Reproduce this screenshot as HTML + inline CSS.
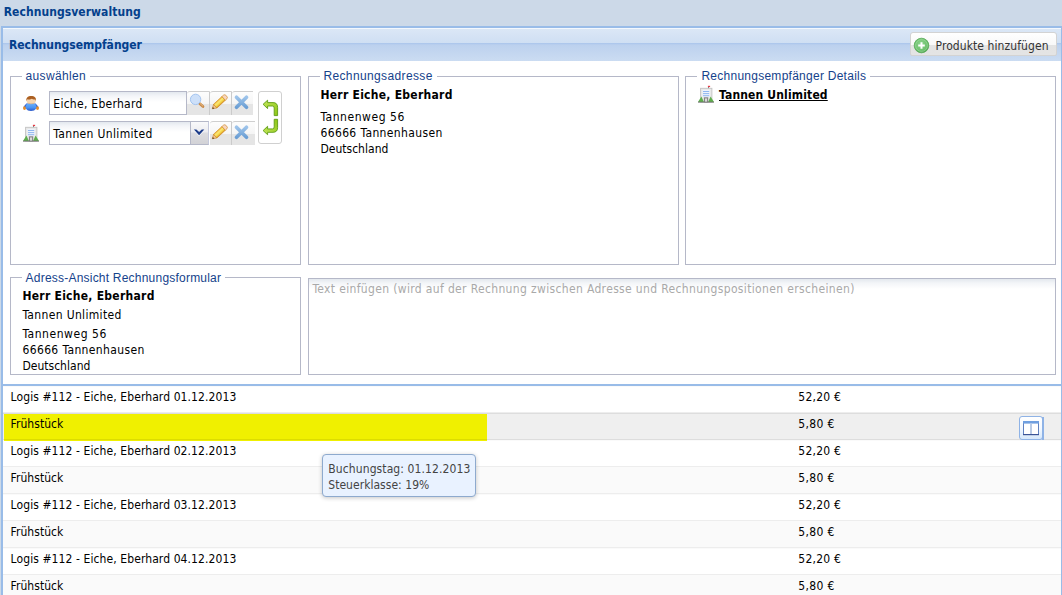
<!DOCTYPE html>
<html lang="de"><head><meta charset="utf-8"><title>Rechnungsverwaltung</title>
<style>
html,body{margin:0;padding:0;}
body{width:1062px;height:595px;overflow:hidden;background:#ccd9e8;position:relative;font-family:"DejaVu Sans Condensed","Liberation Sans",sans-serif;font-size:12px;}
.a{position:absolute;box-sizing:border-box;}
.t{position:absolute;white-space:pre;font-size:12px;line-height:16px;height:16px;}
.panel{left:1px;top:26px;width:1062px;height:600px;border:2px solid #99bce8;background:#fff;}
.hl{left:3px;top:28px;width:1058px;height:1px;background:#f3f8fd;}
.hdr{left:3px;top:29px;width:1058px;height:32px;background:linear-gradient(#dbe7f6 0px,#cfdff3 14px,#a9c5eb 14px,#b2caed 15px,#bcd1ee 16px,#cbdcf2 32px);}
.fs{border:1px solid #b5b8c8;}
.lg{background:#fff;height:3px;}
.fld{border:1px solid #b5b8c8;background:linear-gradient(#e3e8ee 0px,#f3f5f8 4px,#fff 10px);}
.trg{background:linear-gradient(#fdfdfd 0,#f5f5f5 12px,#e5e5e5 12px,#e5e5e5 100%);border-top:1px solid #cfcfcf;border-top-left-radius:3px;}
.sep{border-right:1px solid #cbcbcb;}
.btn{border:1px solid #d3d3d3;border-radius:3px 3px 2px 2px;background:linear-gradient(#ffffff 0,#f8f8f8 12px,#e3e3e3 12px,#e4e4e4 100%);}
.row{left:3px;width:1058px;height:27px;border-top:1px solid #fafafa;border-bottom:1px solid #ededed;background:#fff;}
.alt{background:#fafafa;}
.over{background:#efefef;border-color:#dddddd;}
svg{position:absolute;overflow:visible;}
.ar{font-family:"Liberation Sans","DejaVu Sans Condensed",sans-serif;}

</style></head><body>
<div class="a panel"></div>
<div class="a hl"></div>
<div class="a hdr"></div>
<!-- button Produkte -->
<div class="a btn" style="left:910px;top:32px;width:147px;height:24px;"></div>
<svg style="left:913px;top:37px" width="17" height="17" viewBox="0 0 17 17">
 <defs><radialGradient id="ga" cx="0.45" cy="0.4" r="0.6"><stop offset="0" stop-color="#8fd58f"/><stop offset="0.75" stop-color="#6cc06c"/><stop offset="1" stop-color="#4da24d"/></radialGradient></defs>
 <circle cx="8.5" cy="8.5" r="7.3" fill="url(#ga)" stroke="#55a955" stroke-width="0.8"/>
 <circle cx="8.5" cy="8.5" r="5.9" fill="none" stroke="#a5dca5" stroke-width="0.7" opacity="0.8"/>
 <path d="M7.5 5.2h2v2.3h2.3v2H9.5v2.3h-2V9.5H5.2v-2h2.3z" fill="#fff"/>
</svg>
<!-- fieldsets -->
<div class="a fs" style="left:10px;top:76px;width:291px;height:189px;"></div>
<div class="a fs" style="left:308px;top:76px;width:371px;height:189px;"></div>
<div class="a fs" style="left:685px;top:76px;width:371px;height:189px;"></div>
<div class="a fs" style="left:10px;top:277px;width:291px;height:98px;"></div>
<div class="a lg" style="left:22px;top:75px;width:68px;"></div>
<div class="a lg" style="left:320px;top:75px;width:117px;"></div>
<div class="a lg" style="left:697px;top:75px;width:173px;"></div>
<div class="a lg" style="left:22px;top:276px;width:203px;"></div>
<!-- textarea -->
<div class="a fld" style="left:308px;top:278px;width:748px;height:97px;"></div>
<!-- field row 1 -->
<div class="a fld" style="left:49px;top:91px;width:138px;height:24px;"></div>
<div class="a trg sep" style="left:187px;top:91px;width:23px;height:24px;"></div>
<div class="a trg sep" style="left:210px;top:91px;width:22px;height:24px;"></div>
<div class="a trg" style="left:232px;top:91px;width:21px;height:24px;"></div>
<!-- field row 2 -->
<div class="a fld" style="left:49px;top:121px;width:142px;height:24px;"></div>
<div class="a" style="left:190px;top:121px;width:19px;height:24px;border:1px solid #b5b8c8;border-right-color:#c4c8dc;background:linear-gradient(#f9f9fb 0,#ececf0 10px,#dcdce0 11px,#d2d2d6 100%);"></div>
<svg style="left:193px;top:128px" width="12" height="9" viewBox="0 0 12 9">
 <path d="M.9 2.6 L3.4 2.6 L6.1 5.2 L8.8 2.6 L11.3 2.6 L6.1 8.2 Z" fill="#fff" opacity=".8"/>
 <path d="M.9 1.5 L3.4 1.5 L6.1 4.1 L8.8 1.5 L11.3 1.5 L6.1 7.2 Z" fill="#1d3c8a"/>
</svg>
<div class="a trg sep" style="left:210px;top:121px;width:22px;height:24px;background:linear-gradient(#fdfdfd 0,#f5f5f5 12px,#e5e5e5 12px,#e5e5e5 100%);"></div>
<div class="a trg" style="left:232px;top:121px;width:23px;height:24px;"></div>
<!-- swap button -->
<div class="a" style="left:258px;top:91px;width:24px;height:53px;border:1px solid #d0d0d0;border-radius:3px;background:#fff;"></div>
<!-- grid -->
<div class="a" style="left:3px;top:384px;width:1058px;height:2px;background:#99bce8;"></div>
<div class="a row" style="top:386px;"></div>
<div class="a row over" style="top:413px;"></div>
<div class="a row" style="top:440px;"></div>
<div class="a row alt" style="top:467px;"></div>
<div class="a row" style="top:494px;"></div>
<div class="a row alt" style="top:521px;"></div>
<div class="a row" style="top:548px;"></div>
<div class="a row alt" style="top:575px;"></div>
<div class="a" style="left:4px;top:414px;width:483px;height:27px;background:#f0f000;border-bottom:0;"></div>
<div class="a" style="left:4px;top:439px;width:483px;height:1px;background:#dcdc00;"></div>
<!-- grid action button -->
<div class="a" style="left:1042px;top:417px;width:2px;height:23px;background:#8fb3e6;"></div>
<div class="a" style="left:1019px;top:416px;width:24px;height:24px;border:1px solid #8fb3e6;border-radius:3px;background:linear-gradient(#ffffff 0,#f4f9ff 50%,#d6e8fb 100%);"></div>
<!-- tooltip -->
<div class="a" style="left:322px;top:454px;width:154px;height:43px;border:1px solid #8eaace;border-radius:4px;background:#e9f2ff;box-shadow:0 1px 4px rgba(0,0,0,0.22);z-index:10;"></div>
<!-- ICONS -->
<svg width="0" height="0" style="left:0;top:0">
 <defs>
  <linearGradient id="gb" x1="0" y1="0" x2="0" y2="1"><stop offset="0" stop-color="#6db4fb"/><stop offset="0.6" stop-color="#4a93f3"/><stop offset="1" stop-color="#2a55c6"/></linearGradient>
  <linearGradient id="gp" x1="0" y1="0" x2="0" y2="1"><stop offset="0" stop-color="#f0b637"/><stop offset="0.35" stop-color="#fae978"/><stop offset="0.7" stop-color="#f3d446"/><stop offset="1" stop-color="#d98f1f"/></linearGradient>
  <linearGradient id="gg" x1="0" y1="0" x2="1" y2="1"><stop offset="0" stop-color="#c3e65a"/><stop offset="1" stop-color="#8cc514"/></linearGradient>
  <linearGradient id="gx" x1="0" y1="0" x2="0" y2="1"><stop offset="0" stop-color="#9cc3ea"/><stop offset="1" stop-color="#6c9fd4"/></linearGradient>
  <g id="user">
   <path d="M4.2 7.9 C2.4 9.1 .9 11 .5 12.3 L3 13.8 C3.4 12.3 4.7 10.9 5.8 10.2 Z" fill="#3a68d6"/>
   <path d="M11.8 7.9 C13.6 9.1 15.1 11 15.5 12.3 L13 13.8 C12.6 12.3 11.3 10.9 10.2 10.2 Z" fill="#3a68d6"/>
   <ellipse cx="1.5" cy="13.1" rx="1.5" ry="1.9" fill="#e58c2a"/>
   <ellipse cx="14.5" cy="13.1" rx="1.5" ry="1.9" fill="#e58c2a"/>
   <path d="M3.5 9.2 Q8 6.4 12.5 9.2 Q13.9 11.5 12.8 14 Q11.7 16 8 16 Q4.3 16 3.2 14 Q2.1 11.5 3.5 9.2 Z" fill="url(#gb)"/>
   <rect x="3.5" y="1.1" width="9.4" height="7.7" rx="3.5" fill="#f5d5b0"/>
   <path d="M3.5 6 C2.8 2.6 5.3 .9 8.2 .9 C11.1 .9 13.6 2.6 12.9 6 L12.3 4.4 C11 4.8 9.6 4.6 8.8 3.8 C8 4.5 5.8 4.7 4.2 4.3 Z" fill="#ab5f22"/>
   <path d="M5 7.8 Q8 9.5 11.2 7.8 L10.6 8.7 Q8 9.6 5.6 8.7 Z" fill="#d9a06a"/>
  </g>
  <g id="bld">
   <rect x="9.9" y="-.2" width="2.2" height="1.3" fill="#e83a44"/>
   <rect x="10" y="1" width=".9" height="2.2" fill="#6e6e6e"/>
   <rect x="2.6" y="2.3" width="11.3" height="13.6" fill="#e9e9e9" stroke="#c2c2c2" stroke-width=".9"/>
   <rect x="4.5" y="4" width="7.2" height="6.8" fill="#edf3fc"/>
   <rect x="5" y="5" width="6.2" height="1" fill="#8fb6ef"/>
   <rect x="5" y="7.1" width="6.2" height="1" fill="#8fb6ef"/>
   <rect x="5" y="9.2" width="6.2" height="1" fill="#8fb6ef"/>
   <path d="M0 16 L3.4 10.4 L5.9 16 Z" fill="#5fae4e"/>
   <path d="M16 16 L12.6 10.4 L10.1 16 Z" fill="#5fae4e"/>
   <rect x="5.9" y="11.3" width="4.3" height="4.9" fill="#858585"/>
   <rect x="7" y="12.4" width="2.1" height="3.8" fill="#dadada"/>
   <rect x="0" y="15.7" width="16" height=".9" fill="#6a6a6a"/>
  </g>
  <g id="pen">
   <g transform="rotate(-42.5)">
    <path d="M0 0 L4 -2.5 L4 2.5 Z" fill="#f3c38e" stroke="#b8741c" stroke-width=".5"/>
    <path d="M0 0 L1.7 -1.05 L1.7 1.05 Z" fill="#4a2c0c"/>
    <rect x="4" y="-2.5" width="11.4" height="5" fill="url(#gp)" stroke="#cf861e" stroke-width=".6"/>
    <path d="M15.4 -2.5 L17.6 -2.5 Q19.2 -2.5 19.2 0 Q19.2 2.5 17.6 2.5 L15.4 2.5 Z" fill="#f7d5bf" stroke="#cf861e" stroke-width=".6"/>
   </g>
  </g>
  <g id="crs">
   <path d="M-5 -5 L5 5 M5 -5 L-5 5" stroke="url(#gx)" stroke-width="3.7" stroke-linecap="round" fill="none"/>
  </g>
  <g id="arr">
   <path d="M5.1 4.3 L9.6 .2 L9.6 2.6 L15 2.6 Q19.6 2.6 19.6 7.4 L19.6 15.6 L16.2 15.6 L16.2 8 Q16.2 6 14.4 6 L9.6 6 L9.6 8.6 Z" fill="url(#gg)" stroke="#5e9c14" stroke-width=".9" stroke-linejoin="round"/>
  </g>
 </defs>
</svg>
<svg style="left:23px;top:95px" width="16" height="16" viewBox="0 0 16 16"><use href="#user"/></svg>
<svg style="left:23px;top:125px" width="16" height="17" viewBox="0 0 16 17"><use href="#bld"/></svg>
<svg style="left:698px;top:86px" width="16" height="17" viewBox="0 0 16 17"><use href="#bld"/></svg>
<!-- magnifier -->
<svg style="left:187px;top:91px" width="22" height="24" viewBox="187 91 22 24">
 <path d="M199.6 103.4 L203 106.6" stroke="#c98a48" stroke-width="2.7" stroke-linecap="round"/>
 <path d="M200.2 103.6 L202.8 106.1" stroke="#ecc08c" stroke-width=".9" stroke-linecap="round"/>
 <circle cx="195.6" cy="99.4" r="5.2" fill="#cde0f9" stroke="#a3c4f0" stroke-width="1"/>
</svg>
<svg style="left:0;top:0" width="1062" height="595" viewBox="0 0 1062 595">
 <use href="#pen" x="212.3" y="108.8"/>
 <use href="#pen" x="212.3" y="138.8"/>
 <use href="#crs" x="241.5" y="102.3"/>
 <use href="#crs" x="241.5" y="132.3"/>
 <use href="#arr" x="258" y="100"/>
 <g transform="translate(258,134.9) scale(1,-1)"><use href="#arr"/></g>
 <!-- tile icon -->
 <rect x="1023.5" y="421.5" width="15" height="13" fill="#fff" stroke="#5f80c0" stroke-width="1"/>
 <rect x="1023" y="421" width="16" height="2.6" fill="#6f9fe0"/>
 <rect x="1030" y="423.6" width="2" height="10.4" fill="#b9cbe6"/>
 <rect x="1023" y="434" width="16" height="1.2" fill="#3a5496"/>
</svg>

<div class="t" style="left:3.7px;top:4px;color:#04408c;letter-spacing:0.063px;font-weight:bold;">Rechnungsverwaltung</div>
<div class="t" style="left:8.9px;top:37px;color:#04408c;letter-spacing:-0.017px;font-weight:bold;">Rechnungsempfänger</div>
<div class="t" style="left:935.5px;top:38px;color:#333;letter-spacing:0.082px;">Produkte hinzufügen</div>
<div class="t ar" style="left:25.6px;top:68px;color:#15428b;letter-spacing:0.328px;">auswählen</div>
<div class="t ar" style="left:323.4px;top:68px;color:#15428b;letter-spacing:0.373px;">Rechnungsadresse</div>
<div class="t ar" style="left:701.4px;top:68px;color:#15428b;letter-spacing:0.26px;">Rechnungsempfänger Details</div>
<div class="t ar" style="left:25.6px;top:270px;color:#15428b;letter-spacing:0.215px;">Adress-Ansicht Rechnungsformular</div>
<div class="t" style="left:53.3px;top:96px;color:#000;letter-spacing:0.272px;">Eiche, Eberhard</div>
<div class="t" style="left:53.3px;top:126px;color:#000;letter-spacing:0.345px;">Tannen Unlimited</div>
<div class="t" style="left:320.4px;top:87px;color:#000;letter-spacing:0.269px;font-weight:bold;">Herr Eiche, Eberhard</div>
<div class="t" style="left:320.4px;top:109px;color:#000;letter-spacing:0.555px;">Tannenweg 56</div>
<div class="t" style="left:320.4px;top:125px;color:#000;letter-spacing:0.378px;">66666 Tannenhausen</div>
<div class="t" style="left:320.4px;top:141px;color:#000;letter-spacing:0.023px;">Deutschland</div>
<div class="t" style="left:719px;top:87px;color:#000;letter-spacing:0.156px;font-weight:bold;text-decoration:underline;">Tannen Unlimited</div>
<div class="t" style="left:22.4px;top:288px;color:#000;letter-spacing:0.269px;font-weight:bold;">Herr Eiche, Eberhard</div>
<div class="t" style="left:22.4px;top:307px;color:#000;letter-spacing:0.345px;">Tannen Unlimited</div>
<div class="t" style="left:22.4px;top:326px;color:#000;letter-spacing:0.555px;">Tannenweg 56</div>
<div class="t" style="left:22.4px;top:342px;color:#000;letter-spacing:0.378px;">66666 Tannenhausen</div>
<div class="t" style="left:22.4px;top:358px;color:#000;letter-spacing:0.023px;">Deutschland</div>
<div class="t" style="left:312.4px;top:281px;color:#a9a9a9;letter-spacing:0.347px;">Text einfügen (wird auf der Rechnung zwischen Adresse und Rechnungspositionen erscheinen)</div>
<div class="t" style="left:10.6px;top:389px;color:#000;letter-spacing:0.094px;">Logis #112 - Eiche, Eberhard 01.12.2013</div>
<div class="t" style="left:798.3px;top:389px;color:#000;letter-spacing:0.233px;">52,20 €</div>
<div class="t" style="left:10.6px;top:416px;color:#000;letter-spacing:0.043px;">Frühstück</div>
<div class="t" style="left:798.3px;top:416px;color:#000;letter-spacing:0.334px;">5,80 €</div>
<div class="t" style="left:10.6px;top:443px;color:#000;letter-spacing:0.094px;">Logis #112 - Eiche, Eberhard 02.12.2013</div>
<div class="t" style="left:798.3px;top:443px;color:#000;letter-spacing:0.233px;">52,20 €</div>
<div class="t" style="left:10.6px;top:470px;color:#000;letter-spacing:0.043px;">Frühstück</div>
<div class="t" style="left:798.3px;top:470px;color:#000;letter-spacing:0.334px;">5,80 €</div>
<div class="t" style="left:10.6px;top:497px;color:#000;letter-spacing:0.094px;">Logis #112 - Eiche, Eberhard 03.12.2013</div>
<div class="t" style="left:798.3px;top:497px;color:#000;letter-spacing:0.233px;">52,20 €</div>
<div class="t" style="left:10.6px;top:524px;color:#000;letter-spacing:0.043px;">Frühstück</div>
<div class="t" style="left:798.3px;top:524px;color:#000;letter-spacing:0.334px;">5,80 €</div>
<div class="t" style="left:10.6px;top:551px;color:#000;letter-spacing:0.094px;">Logis #112 - Eiche, Eberhard 04.12.2013</div>
<div class="t" style="left:798.3px;top:551px;color:#000;letter-spacing:0.233px;">52,20 €</div>
<div class="t" style="left:10.6px;top:578px;color:#000;letter-spacing:0.043px;">Frühstück</div>
<div class="t" style="left:798.3px;top:578px;color:#000;letter-spacing:0.334px;">5,80 €</div>
<div class="t" style="left:328.3px;top:461px;color:#444;letter-spacing:0.102px;z-index:20;">Buchungstag: 01.12.2013</div>
<div class="t" style="left:328.3px;top:477px;color:#444;letter-spacing:0.032px;z-index:20;">Steuerklasse: 19%</div>
</body></html>
